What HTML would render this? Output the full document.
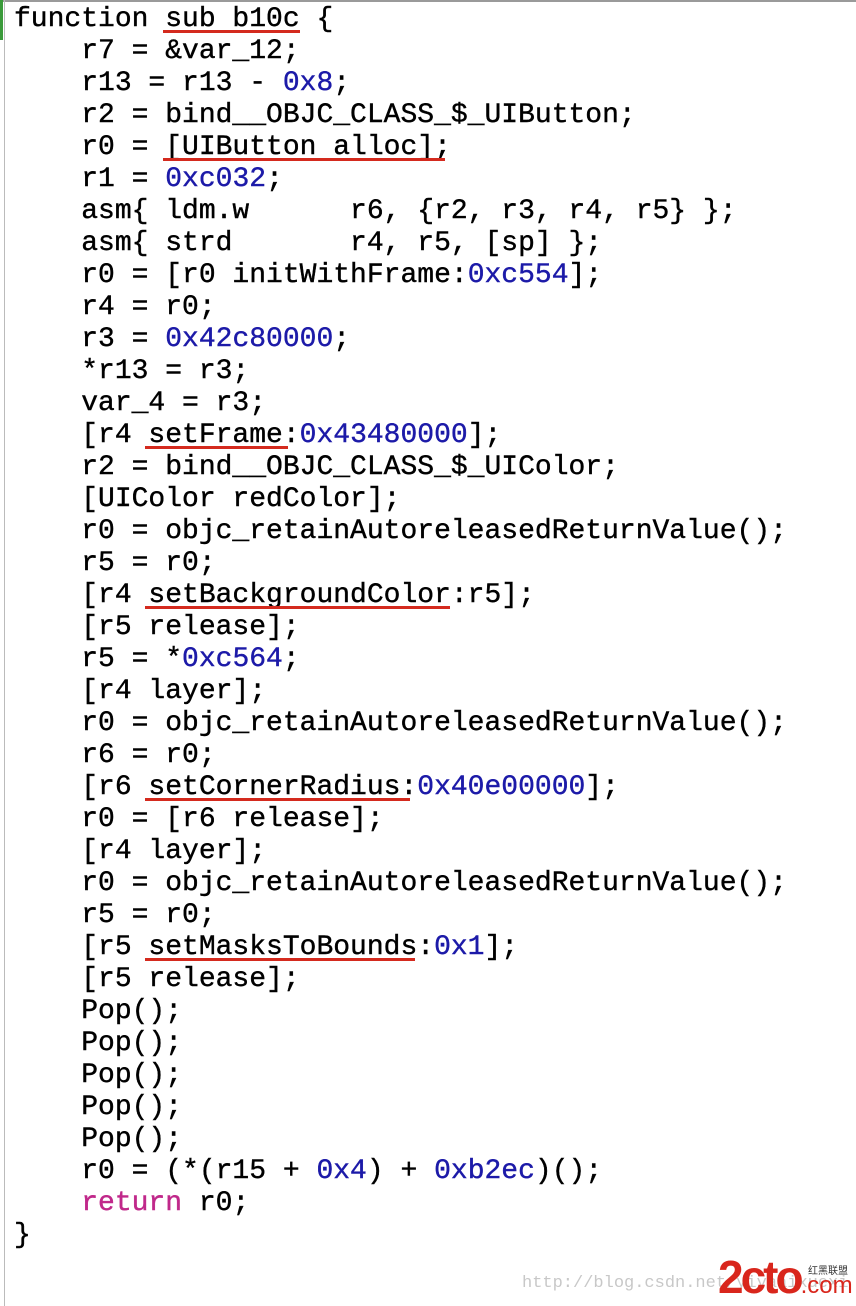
<!DOCTYPE html>
<html><head><meta charset="utf-8"><style>
html,body{margin:0;padding:0;background:#fff;}
body{width:856px;height:1306px;position:relative;overflow:hidden;}
pre{margin:0;position:absolute;left:14px;top:4px;font-family:"Liberation Mono",monospace;font-size:28px;line-height:32px;color:#000;-webkit-text-stroke:0.4px #000;}
.n{color:#1c1aa8;-webkit-text-stroke:0.4px #1c1aa8}.k{color:#c0288a;-webkit-text-stroke:0.4px #c0288a}
.u{position:absolute;height:3px;background:#d42a1e;}
.wm{position:absolute;left:522px;top:1274px;font-family:"Liberation Mono",monospace;font-size:17px;color:#c8c8c8;}
.logo{position:absolute;left:718px;top:1250px;font-family:"Liberation Sans",sans-serif;font-weight:bold;color:#d9261c;font-size:46px;letter-spacing:-3px;}
.logo small{font-size:24px;letter-spacing:0;font-weight:normal;}
.cn{position:absolute;left:808px;top:1262px;font-family:"Noto Sans CJK SC",sans-serif;font-size:10px;color:#333;}
</style></head><body>
<div style="position:absolute;left:0;top:0;width:856px;height:2px;background:#9a9a9a"></div>
<div style="position:absolute;left:4px;top:0;width:1px;height:1306px;background:#bbb"></div>
<div style="position:absolute;left:0;top:0;width:3px;height:40px;background:#3a9a3a"></div>
<pre>function sub b10c {
    r7 = &amp;var_12;
    r13 = r13 - <span class="n">0x8</span>;
    r2 = bind__OBJC_CLASS_$_UIButton;
    r0 = [UIButton alloc];
    r1 = <span class="n">0xc032</span>;
    asm{ ldm.w      r6, {r2, r3, r4, r5} };
    asm{ strd       r4, r5, [sp] };
    r0 = [r0 initWithFrame:<span class="n">0xc554</span>];
    r4 = r0;
    r3 = <span class="n">0x42c80000</span>;
    *r13 = r3;
    var_4 = r3;
    [r4 setFrame:<span class="n">0x43480000</span>];
    r2 = bind__OBJC_CLASS_$_UIColor;
    [UIColor redColor];
    r0 = objc_retainAutoreleasedReturnValue();
    r5 = r0;
    [r4 setBackgroundColor:r5];
    [r5 release];
    r5 = *<span class="n">0xc564</span>;
    [r4 layer];
    r0 = objc_retainAutoreleasedReturnValue();
    r6 = r0;
    [r6 setCornerRadius:<span class="n">0x40e00000</span>];
    r0 = [r6 release];
    [r4 layer];
    r0 = objc_retainAutoreleasedReturnValue();
    r5 = r0;
    [r5 setMasksToBounds:<span class="n">0x1</span>];
    [r5 release];
    Pop();
    Pop();
    Pop();
    Pop();
    Pop();
    r0 = (*(r15 + <span class="n">0x4</span>) + <span class="n">0xb2ec</span>)();
    <span class="k">return</span> r0;
}</pre>
<div class="u" style="left:163px;width:137px;top:30px"></div>
<div class="u" style="left:163px;width:282px;top:158px"></div>
<div class="u" style="left:145px;width:143px;top:446px"></div>
<div class="u" style="left:145px;width:305px;top:606px"></div>
<div class="u" style="left:145px;width:265px;top:798px"></div>
<div class="u" style="left:145px;width:270px;top:958px"></div>
<div class="wm">http://blog.csdn.net/yiyaaixuexi</div>
<div class="logo">2cto<small>.com</small></div>
<div class="cn">红黑联盟</div>
</body></html>
